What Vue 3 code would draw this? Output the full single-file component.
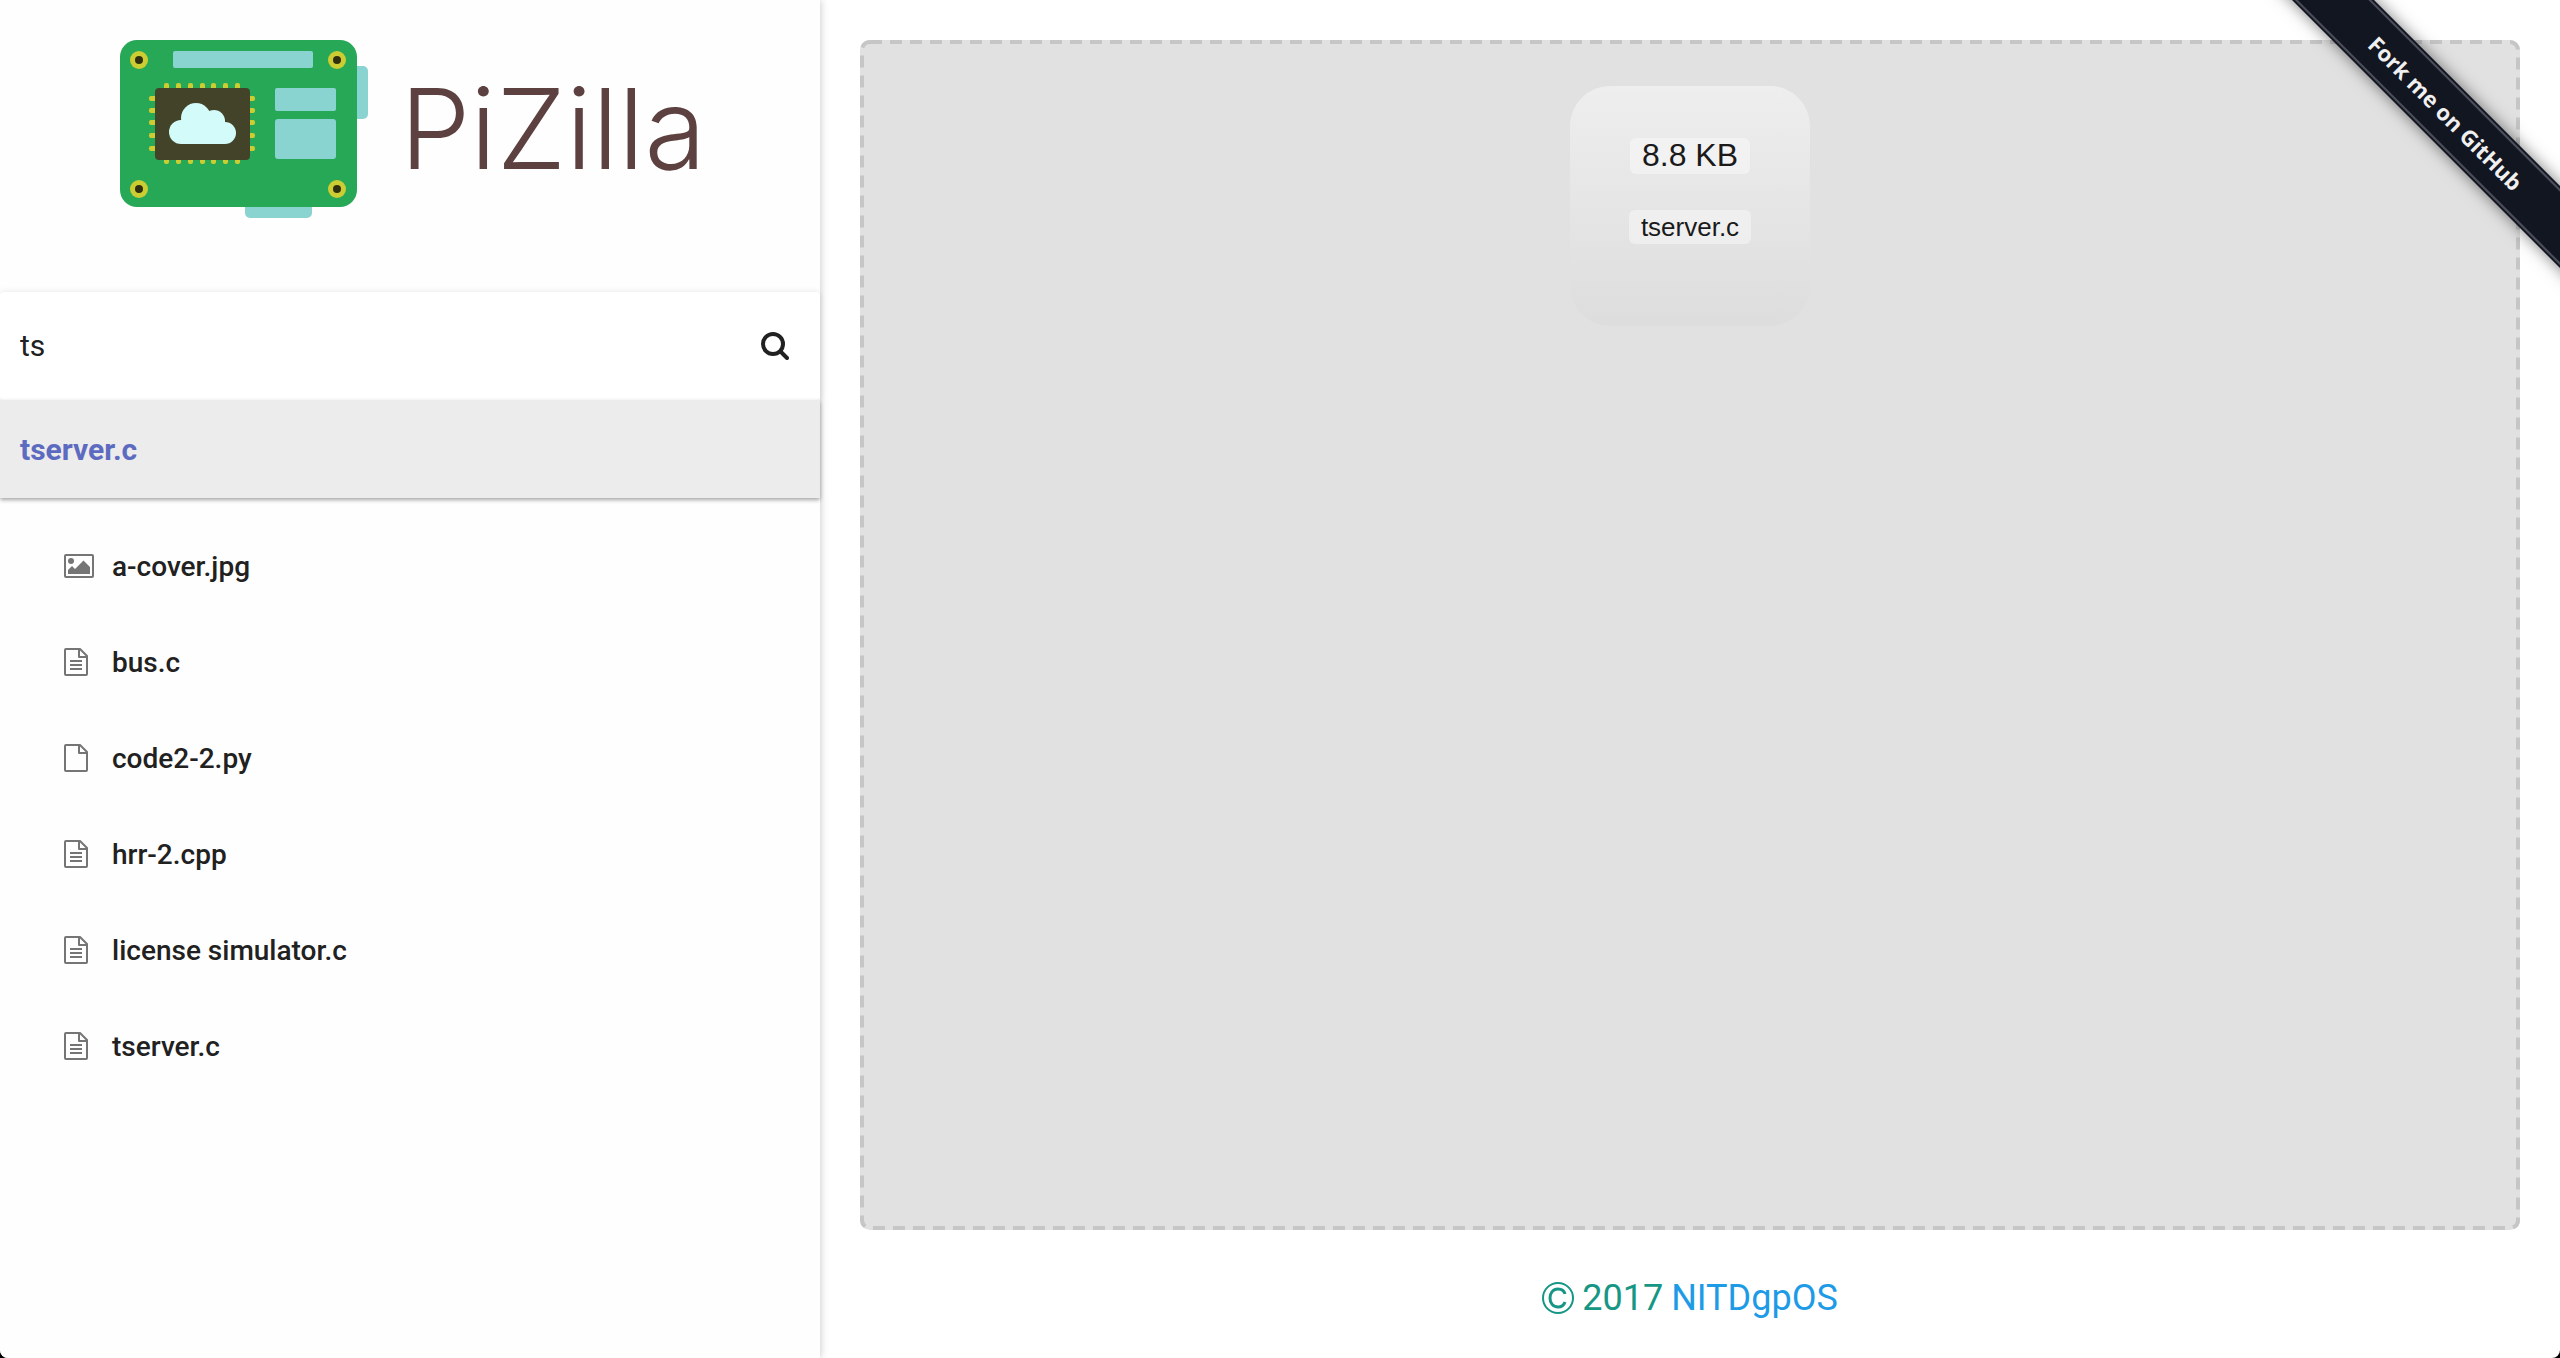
<script setup>
import { ref } from 'vue'

const query = ref('ts')
const results = ['tserver.c']
const files = [
  { name: 'a-cover.jpg', type: 'image' },
  { name: 'bus.c', type: 'text' },
  { name: 'code2-2.py', type: 'file' },
  { name: 'hrr-2.cpp', type: 'text' },
  { name: 'license simulator.c', type: 'text' },
  { name: 'tserver.c', type: 'text' }
]
const uploads = [{ size: '8.8 KB', name: 'tserver.c' }]

const pinColumns = [66, 78, 90, 102, 113, 125, 137]
const pinRows = [79, 91, 103, 116, 129]
const screws = [[39, 40], [237, 40], [39, 169], [237, 169]]
</script>

<template>
  <div class="page">
    <aside class="sidebar">
      <header class="brand">
        <svg class="board" viewBox="0 0 268 198" aria-hidden="true">
          <rect x="240" y="46" width="28" height="53" rx="5" fill="#89d3d0" />
          <rect x="145" y="170" width="67" height="28" rx="5" fill="#89d3d0" />
          <rect x="20" y="20" width="237" height="167" rx="17" fill="#27a857" />
          <rect x="73" y="31" width="140" height="17" rx="2" fill="#89d3d0" />
          <rect x="175" y="68" width="61" height="23" rx="2" fill="#89d3d0" />
          <rect x="175" y="99" width="61" height="40" rx="3" fill="#89d3d0" />
          <g fill="#cccc33">
            <rect v-for="x in pinColumns" :key="'c' + x" :x="x - 2" y="63" width="5" height="81" rx="2" />
            <rect v-for="y in pinRows" :key="'r' + y" x="49" :y="y - 3" width="106" height="5" rx="2" />
          </g>
          <rect x="55" y="68" width="95" height="72" rx="4" fill="#434329" />
          <g fill="#d2fbf9">
            <circle cx="81" cy="112" r="12" />
            <circle cx="96" cy="98" r="15" />
            <circle cx="114" cy="101" r="11" />
            <circle cx="125" cy="113" r="11" />
            <rect x="81" y="100" width="44" height="24" />
          </g>
          <g v-for="s in screws" :key="s.join()">
            <circle :cx="s[0]" :cy="s[1]" r="9" fill="#cccc33" />
            <circle :cx="s[0]" :cy="s[1]" r="4" fill="#2f2f10" />
          </g>
        </svg>
        <h1 class="title">PiZilla</h1>
      </header>

      <form class="search" role="search" @submit.prevent>
        <input v-model="query" class="search-input" type="text" aria-label="Search files" />
        <button class="search-button" type="submit" aria-label="Search">
          <svg viewBox="0 0 28 28" aria-hidden="true">
            <circle cx="12" cy="12" r="10" fill="none" stroke="#212121" stroke-width="4" />
            <path d="M19.500 19.500L26 26" stroke="#212121" stroke-width="4" stroke-linecap="round" />
          </svg>
        </button>
      </form>
      <div class="results">
        <a v-for="r in results" :key="r" class="result" href="#">{{ r }}</a>
      </div>

      <ul class="files">
        <li v-for="f in files" :key="f.name">
          <a class="file" href="#">
            <span class="file-icon">
              <svg v-if="f.type === 'image'" width="30" height="24" viewBox="0 0 30 24" aria-hidden="true">
                <rect x="1" y="1" width="28" height="22" rx="1" fill="none" stroke="#757575" stroke-width="2" />
                <circle cx="7" cy="7" r="3" fill="#757575" />
                <path d="M4 20v-4l4-4 3 3 8.500-8.500 6.500 6.500v7z" fill="#757575" />
              </svg>
              <svg v-else width="24" height="28" viewBox="0 0 24 28" aria-hidden="true">
                <path d="M1 2q0-1 1-1h14l7 7v18q0 1-1 1H2q-1 0-1-1zM15 1v8h8" fill="none" stroke="#757575" stroke-width="2" stroke-linejoin="round" />
                <path v-if="f.type === 'text'" d="M6 13h12M6 17h12M6 21h12" stroke="#757575" stroke-width="2" />
              </svg>
            </span>
            <span>{{ f.name }}</span>
          </a>
        </li>
      </ul>
    </aside>

    <main class="content">
      <section class="dropzone" aria-label="Uploads">
        <svg class="dashes" aria-hidden="true">
          <rect class="dash-line" x="2" y="2" rx="8" />
        </svg>
        <article v-for="u in uploads" :key="u.name" class="preview">
          <span class="chip size">{{ u.size }}</span>
          <span class="chip name">{{ u.name }}</span>
        </article>
      </section>
      <footer class="footer">
        <svg class="copyright" viewBox="0 0 32 32" fill="none" stroke="currentColor" aria-label="Copyright">
          <circle cx="16" cy="16" r="15" stroke-width="2" />
          <path d="M23 12c-1-4-4-5-7-5c-5 0-8 4-8 9s3 9 8 9c4 0 6-2 7-5" stroke-width="3" />
        </svg>
        <span>2017</span>
        <a href="#">NITDgpOS</a>
      </footer>
    </main>

    <div class="ribbon-corner">
      <a class="ribbon" href="#"><span class="ribbon-text">Fork me on GitHub</span></a>
    </div>
  </div>
</template>

<style>
html {
  background: #000;
}
</style>

<style scoped>
.page {
  position: relative;
  display: grid;
  grid-template-columns: 41fr 87fr;
  min-height: 100vh;
  background: #fff;
  border-radius: 0 0 8px 8px;
  overflow: hidden;
  font-family: Roboto, "Liberation Sans", sans-serif;
  color: #212121;
}
.sidebar {
  min-width: 0;
  background: #fefefe;
  box-shadow: 0 0 8px rgba(0, 0, 0, 0.24);
}
.brand {
  display: flex;
  height: 252px;
  padding: 20px 100px;
}
.board {
  width: 268px;
  height: 198px;
}
.title {
  margin: 30px 0 0 32px;
  font: 300 112px/156px Inter, sans-serif;
  color: #5d4040;
}
.search {
  position: relative;
  display: flex;
  align-items: center;
  height: 108px;
  padding: 0 19px 0 20px;
  box-sizing: border-box;
  background: #fff;
  border-radius: 4px;
  box-shadow: 0 0 6px rgba(0, 0, 0, 0.1);
}
.search-input {
  flex: 1;
  min-width: 0;
  padding: 0;
  border: 0;
  outline: 0;
  background: none;
  font: 400 30px/40px Roboto, sans-serif;
  color: #212121;
}
.search-button {
  width: 52px;
  height: 52px;
  padding: 12px;
  border: 0;
  background: none;
}
.search-button svg {
  display: block;
  width: 28px;
  height: 28px;
}
.results {
  position: relative;
  background: #ececec;
  box-shadow: 0 2px 4px rgba(0, 0, 0, 0.35);
}
.result {
  display: block;
  padding: 2px 20px 0;
  font-size: 30px;
  line-height: 96px;
  font-weight: 700;
  color: #5c6bc0;
  text-decoration: none;
}
.files {
  margin: 0;
  padding: 20px 0;
  list-style: none;
}
.file {
  display: flex;
  align-items: center;
  height: 96px;
  padding: 0 64px;
  font-size: 28px;
  font-weight: 500;
  color: #212121;
  text-decoration: none;
}
.file-icon {
  flex: none;
  width: 48px;
}
.file-icon svg {
  display: block;
}
.content {
  display: flex;
  flex-direction: column;
  min-width: 0;
  padding: 40px 40px 0;
}
.dropzone {
  position: relative;
  flex: 1;
  padding: 46px;
  background: #e1e1e1;
  border-radius: 10px;
}
.dashes {
  position: absolute;
  inset: 0;
  width: 100%;
  height: 100%;
}
.dash-line {
  width: calc(100% - 4px);
  height: calc(100% - 4px);
  fill: none;
  stroke: #c6c6c6;
  stroke-width: 4px;
  stroke-dasharray: 12 8;
}
.preview {
  position: relative;
  display: flex;
  flex-direction: column;
  align-items: center;
  gap: 36px;
  width: 240px;
  height: 240px;
  margin: 0 auto;
  padding-top: 52px;
  box-sizing: border-box;
  border-radius: 40px;
  background: linear-gradient(#eee, #ddd);
  font-family: "Liberation Sans", sans-serif;
  color: #1a1a1a;
}
.chip {
  padding: 0 12px;
  border-radius: 6px;
  background: rgba(255, 255, 255, 0.4);
}
.size {
  padding-bottom: 2px;
  font-size: 32px;
  line-height: 34px;
}
.name {
  font-size: 26px;
  line-height: 34px;
}
.footer {
  display: flex;
  justify-content: center;
  align-items: center;
  gap: 8px;
  padding: 48px 0 40px;
  font-size: 36px;
  line-height: 40px;
  color: #169684;
}
.footer a {
  color: #1e9be6;
  text-decoration: none;
}
.copyright {
  width: 32px;
  height: 32px;
}
.ribbon-corner {
  position: absolute;
  top: 0;
  right: 0;
  width: 300px;
  height: 300px;
  overflow: hidden;
}
.ribbon {
  position: absolute;
  top: 84px;
  left: -64px;
  width: 500px;
  height: 58px;
  padding: 2px 0;
  box-sizing: border-box;
  background: #121621;
  box-shadow: 0 0 16px rgba(0, 0, 0, 0.5);
  text-decoration: none;
  transform: rotate(45deg);
}
.ribbon-text {
  display: block;
  border: solid #4c4f5b;
  border-width: 2px 0;
  font: 700 22px/50px "Open Sans", sans-serif;
  text-align: center;
  color: #f0f0f0;
}
</style>
